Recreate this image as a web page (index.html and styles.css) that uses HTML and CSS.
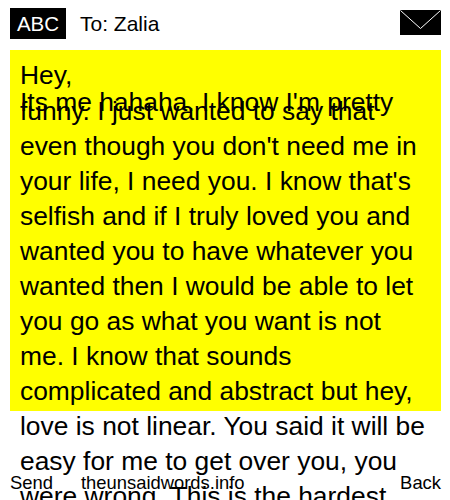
FILE: index.html
```html
<!DOCTYPE html>
<html lang="en">
<head>
    <meta charset="UTF-8">
    <title>To: Zalia</title>
    <link rel="stylesheet" href="styles.css">
</head>
<body>
    <header class="top-bar">
        <span class="mode">ABC</span>
        <span class="recipient">To: Zalia</span>
        <svg class="envelope" width="41" height="25" viewBox="0 0 41 25">
            <rect width="41" height="25" fill="#000"/>
            <path d="M0.5 0.5 L20.5 18.5 L40.5 0.5" fill="none" stroke="#fff" stroke-width="1"/>
        </svg>
    </header>

    <div class="message">
        <div class="opening">Hey,<br>Its me hahaha. I know I'm pretty</div>
        <div class="text">funny. I just wanted to say that even though you don't need me in your life, I need you. I know that's selfish and if I truly loved you and wanted you to have whatever you wanted then I would be able to let you go as what you want is not me. I know that sounds complicated and abstract but hey, love is not linear. You said it will be easy for me to get over you, you were wrong. This is the hardest</div>
    </div>

    <footer class="soft-keys">
        <span class="send">Send</span>
        <span class="site">theunsaidwords.info</span>
        <span class="back">Back</span>
    </footer>
</body>
</html>
```

FILE: styles.css
```css
html, body {
    height: 500px;
    overflow: hidden;
}
body {
    font-family: "Liberation Sans", Arial, sans-serif;
    margin: 0;
    position: relative;
    color: #000;
    background-color: #fff;
}
.top-bar {
    display: flex;
    align-items: center;
    height: 31px;
    padding: 8px 9px 0 10px;
}
.mode {
    width: 56px;
    height: 31px;
    line-height: 31px;
    text-align: center;
    font-size: 20.5px;
    color: #fff;
    background-color: #000;
}
.recipient {
    margin-left: 14px;
    font-size: 21px;
}
.envelope {
    margin-left: auto;
    margin-top: -2px;
}
.message {
    height: 341px;
    margin: 11px 9px 0 10px;
    padding: 12px 10px 8px;
    font-size: 26.4px;
    background-color: #ff0;
}
.opening {
    line-height: 27px;
}
.text {
    margin-top: -22px;
    line-height: 35px;
}
.soft-keys {
    position: absolute;
    left: 10px;
    right: 9px;
    top: 471px;
    display: flex;
    font-size: 18.4px;
    line-height: 24px;
}
.site {
    margin-left: 28px;
}
.back {
    margin-left: auto;
}
```
